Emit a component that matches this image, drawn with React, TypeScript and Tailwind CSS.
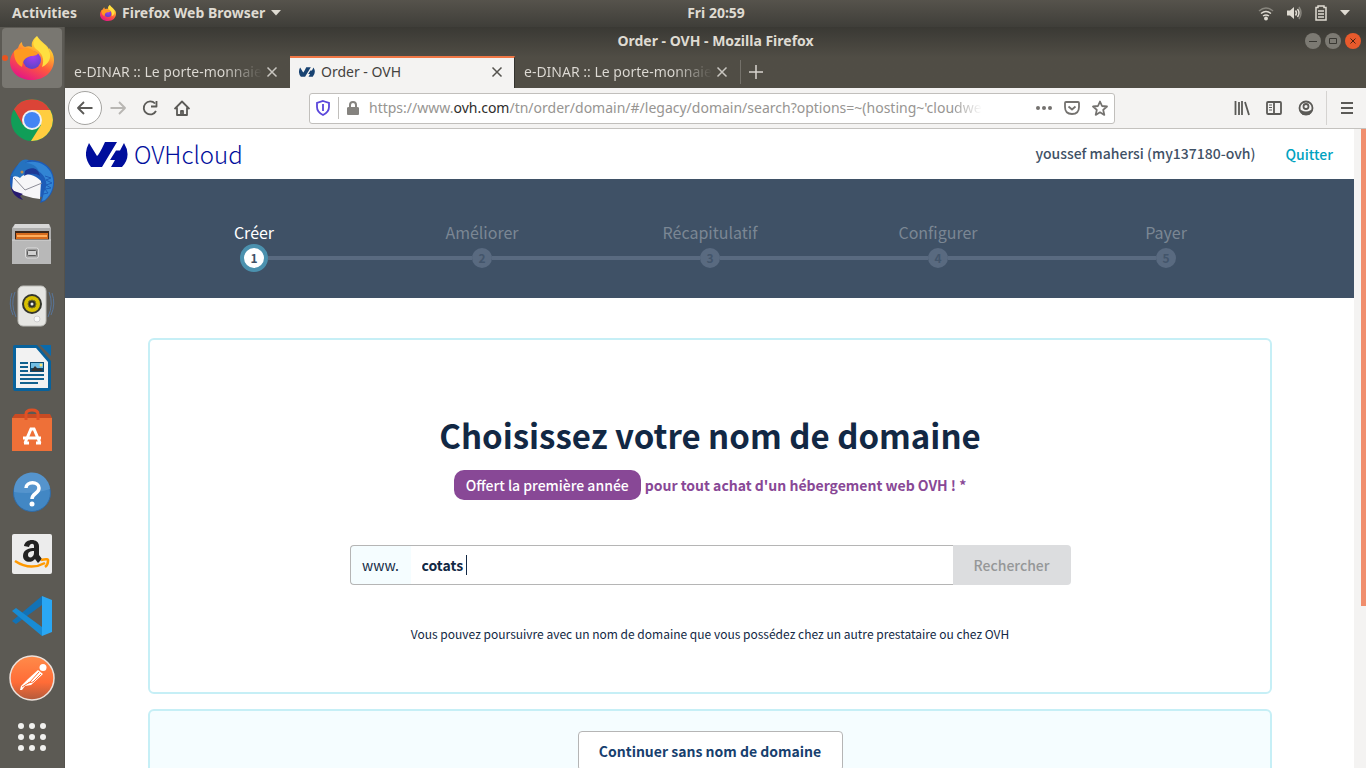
import type { ReactNode } from 'react';

const steps = ['Créer', 'Améliorer', 'Récapitulatif', 'Configurer', 'Payer'];

function FirefoxIcon({ className, id }: { className: string; id: string }) {
  return (
    <svg viewBox="0 0 44 44" className={className} aria-hidden="true">
      <defs>
        <linearGradient id={id + 'a'} x1="0.8" y1="0" x2="0.3" y2="1">
          <stop offset="0" stopColor="#fff44f" />
          <stop offset="0.3" stopColor="#ffb92e" />
          <stop offset="0.6" stopColor="#ff5a3c" />
          <stop offset="1" stopColor="#e31587" />
        </linearGradient>
        <radialGradient id={id + 'b'} cx="0.55" cy="0.3" r="0.7">
          <stop offset="0" stopColor="#a63df0" />
          <stop offset="1" stopColor="#5b45c9" />
        </radialGradient>
      </defs>
      <path
        d="M27 0c-4 3-6 7-5 11-2-1-5-1-7 0-3-1-3-4-3-5-2 1-3 3-4 6C4 14 0 20 0 26c0 10 9 18 22 18s22-9 22-20c0-5-2-9-5-12 0 2 1 3 1 4-2-8-9-9-13-16z"
        fill={'url(#' + id + 'a)'}
      />
      <circle cx="22" cy="24" r="9" fill={'url(#' + id + 'b)'} />
      <path d="M4 15c3-2 7-2 10-2 2-2 5-1 8 1l6 3c0 2-3 3-7 3-4 1-7 3-8 6l-1 5C5 27 4 21 4 15z" fill="#ff9a20" />
      <path d="M27 1c-4 4-5 8-1 12 6 4 9 10 6 18 7-3 10-10 7-16-2-6-9-8-12-14z" fill="#ffdf40" />
    </svg>
  );
}

function Launcher() {
  return (
    <nav
      aria-label="Dock"
      className="flex w-[65px] shrink-0 flex-col items-center border-r border-[#54524c] bg-[#5c5a54]"
    >
      <DockItem label="Firefox" active>
        <FirefoxIcon id="dock" className="size-11" />
      </DockItem>
      <DockItem label="Chrome">
        <svg viewBox="0 0 44 44" className="size-11">
          <circle cx="22" cy="22" r="21" fill="#109e58" />
          <path d="M22 22 3.800 11.500A21 21 0 0 1 40.200 12H22z" fill="#db4437" />
          <path d="M22 12h18.200A21 21 0 0 1 21 43l10-16z" fill="#ffcd40" />
          <path d="M4 11 13 27l9-15z" fill="#db4437" />
          <circle cx="22" cy="22" r="10" fill="#f1f1f1" />
          <circle cx="22" cy="22" r="8" fill="#4285f4" />
        </svg>
      </DockItem>
      <DockItem label="Thunderbird">
        <svg viewBox="0 0 46 46" className="size-[46px]">
          <path d="M11 4C20-2 36 1 42 11c6 11 3 24-6 31l-5 2 2-6L4 33C-2 22 1 12 11 4z" fill="#1d5cb8" />
          <path d="M14 5c9-5 24-2 29 11 3 9 0 19-7 25l-3 1 2-9C44 18 26 8 14 5z" fill="#3285d4" />
          <path d="m36 17 6 2-5 2 6 3-6 2 5 3-6 1 3 4-5 1" stroke="#1d5cb8" fill="none" />
          <path d="M4 18c8-5 21-4 28 4l-1 18C22 39 11 36 3 31z" fill="#f6f6f8" />
          <path d="m5 19 11 12 17-7" fill="none" stroke="#8d8d98" strokeWidth="1" />
          <path d="M2 17 10 4c3-4 7-4 10-3l-4 3c9 0 14 5 15 13-8-4-16-3-20 2-3-2-6-2-9-2z" fill="#2572bf" />
          <path d="M16 12c6-5 14-3 15 5-5-3-11-3-16 0z" fill="#1c3896" />
          <circle cx="13" cy="13" r="1.500" fill="#bf8c4e" />
          <path d="m2 28 3 4 9 3-3 2 3 4C7 39 3 34 2 28z" fill="#27196e" />
        </svg>
      </DockItem>
      <DockItem label="Files">
        <svg viewBox="0 0 44 44" className="size-11">
          <path d="M5 2h34l2 4v36H2V6z" fill="#aeaeae" />
          <path d="M5 2h34l1 4H3z" fill="#d7d7d7" />
          <path d="M5 9h34v9H5z" fill="#3c2619" />
          <path d="M6 11h32v6H6z" fill="#d66a1c" />
          <path d="M7 13h30v2H7z" fill="#ffad5b" />
          <path d="M2 18h39v24H2z" fill="#b8b8b8" />
          <path d="M2 18h39" stroke="#d4d4d4" />
          <rect x="15.500" y="26" width="13" height="10" rx="2" fill="#9c9c9c" stroke="#dedede" />
          <rect x="17.500" y="28.500" width="9" height="5" rx="1" fill="#d1d1d1" stroke="#595959" />
        </svg>
      </DockItem>
      <DockItem label="Rhythmbox">
        <svg viewBox="0 0 46 46" className="size-[46px]">
          <path d="M6 9Q1 21 7 34M3 10q-4 11 1 22M40 9q5 12-1 25M43 10q4 11-1 22" stroke="#58759a" fill="none" />
          <rect x="9" y="3" width="28" height="40" rx="5" fill="#e6e6e3" stroke="#bcbcb8" />
          <circle cx="23" cy="21" r="10" fill="#34362d" />
          <circle cx="23" cy="21" r="8" fill="#d8c000" />
          <circle cx="23" cy="21" r="4" fill="#303029" stroke="#7b711b" />
          <circle cx="23" cy="21" r="1.500" fill="#eee" />
          <circle cx="28" cy="36" r="3" fill="#f8f8f8" stroke="#cfcfcf" />
        </svg>
      </DockItem>
      <DockItem label="Writer">
        <svg viewBox="0 0 42 46" className="h-[46px] w-[42px]">
          <path d="M4 0h22l14 16v27q0 3-3 3H4q-2 0-2-3V2q0-2 2-2z" fill="#08629c" />
          <path d="M29 0h11v11z" fill="#0b6aab" />
          <path d="M5 3h20l12 14v26H5z" fill="#f2f2f2" />
          <path d="M9 18h8M9 22h8M9 26h8M9 30h24M9 34h24M9 38h18" stroke="#11618e" strokeWidth="2" />
          <path d="M19 17h14v10H19z" fill="#0c4c72" />
          <path d="M20 18h12v5H20z" fill="#71bee4" />
          <path d="m20 26 4-5 3 3 2-1 3 3z" fill="#333" />
          <circle cx="30" cy="20" r="1.500" fill="#ffe16b" />
        </svg>
      </DockItem>
      <DockItem label="Software">
        <svg viewBox="0 0 44 46" className="h-[46px] w-11">
          <path d="M2 11 5 7h35l2 4z" fill="#c94b23" />
          <path d="M2 11h40v33H2z" fill="#ee7038" />
          <path d="M16 13V7q0-4 6-4t6 4v6" stroke="#df5125" strokeWidth="3" fill="none" />
          <path d="m15 36 6-14h3l6 14M13 31h18M14 36h5M26 36h5" stroke="#fff" strokeWidth="3" fill="none" />
        </svg>
      </DockItem>
      <DockItem label="Help">
        <svg viewBox="0 0 44 44" className="size-11">
          <circle cx="22" cy="23" r="18.500" fill="#4287c4" stroke="#316ba5" />
          <path d="M4 22a18 18 0 0 1 36-3q-18 6-36 3z" fill="#5594cd" />
          <path d="M16 18c0-7 13-7 13 0 0 6-7 5-7 11" stroke="#fff" strokeWidth="3.500" fill="none" />
          <circle cx="22" cy="34" r="2.500" fill="#fff" />
        </svg>
      </DockItem>
      <DockItem label="Amazon">
        <svg viewBox="0 0 44 44" className="size-11">
          <rect x="2" y="2" width="40" height="40" rx="2" fill="#ececec" />
          <path d="M14 14c1-8 15-8 15 0v9l3 4-4 4-3-4c-4 5-12 3-12-3 0-7 7-8 11-8v-2c0-3-4-3-5 1zm10 5c-4 0-6 1-6 4 0 4 6 3 6-2z" fill="#222" fillRule="evenodd" />
          <path d="M5 29q15 10 30 2M31 28q8-2 7 1 0 4-3 6" stroke="#ff9900" strokeWidth="2.500" fill="none" />
        </svg>
      </DockItem>
      <DockItem label="Code">
        <svg viewBox="0 0 44 44" className="size-11">
          <path d="M2 27 32 2v9L6 30z" fill="#1272b6" />
          <path d="m2 17 4-3 26 19v9z" fill="#188bd4" />
          <path d="m32 2 10 4v32l-10 4z" fill="#2aa7f4" />
        </svg>
      </DockItem>
      <DockItem label="Postman">
        <svg viewBox="0 0 46 46" className="size-[46px]">
          <defs>
            <linearGradient id="postman" x1="0" y1="0" x2="0" y2="1">
              <stop offset="0" stopColor="#ff8b4a" />
              <stop offset="0.600" stopColor="#ff6c37" />
              <stop offset="1" stopColor="#b25a3c" />
            </linearGradient>
          </defs>
          <circle cx="23" cy="23" r="22" fill="url(#postman)" stroke="#ece1db" strokeWidth="1.500" />
          <path d="m11 35 1-4 7-7 10-9 5 4-12 11-6 1-3 4z" fill="#fff" />
          <circle cx="34" cy="12.500" r="3.500" fill="#fff" />
          <path d="m13 32 8-5 9-10M19 28l5-1 8-8" stroke="#ff7137" fill="none" />
        </svg>
      </DockItem>
      <button aria-label="Show applications" className="mt-3 grid size-8 grid-cols-3 place-items-center">
        {Array.from({ length: 9 }, (_, i) => (
          <span key={i} className="size-1.5 rounded-full bg-[#f1f1ef]" />
        ))}
      </button>
    </nav>
  );
}

function DockItem({ label, active, children }: { label: string; active?: boolean; children: ReactNode }) {
  return (
    <button aria-label={label} className="relative flex h-[62px] w-full shrink-0 items-center justify-center">
      {active && <span className="absolute inset-x-0.5 inset-y-px rounded bg-[#797771]" />}
      {active && <span className="absolute left-0.5 size-1.5 rounded-full bg-[#e95420]" />}
      <span className="relative">{children}</span>
    </button>
  );
}

function CloseIcon() {
  return (
    <svg viewBox="0 0 12 12" className="size-3" fill="none" stroke="currentColor" strokeWidth="1.500">
      <path d="m1.500 1.500 9 9m0-9-9 9" />
    </svg>
  );
}

function BackgroundTab() {
  return (
    <div className="flex w-[225px] items-center px-[9px]">
      <span className="w-[188px] overflow-hidden whitespace-nowrap bg-gradient-to-r from-[#dedbd5] from-80% to-transparent bg-clip-text text-transparent">
        e-DINAR :: Le porte-monnaie
      </span>
      <button aria-label="Close tab" className="ml-1 text-[#c9c6c0]">
        <CloseIcon />
      </button>
    </div>
  );
}

function OvhMark({ className }: { className: string }) {
  return (
    <svg viewBox="0 0 42 25" className={className} fill="currentColor" aria-hidden="true">
      <path d="M3 1 11 14Q13 13 19 0H31L16 25H5Q-4 14 3 1z" />
      <path d="M38 1Q46 14 36 25H25L29 18H24L30 8.500H34z" />
    </svg>
  );
}

function SystemBar() {
  return (
    <header className="grid h-[27px] shrink-0 grid-cols-[1fr_auto_1fr] items-center bg-gradient-to-b from-[#56534c] to-[#3f3e39] pb-0.5 text-sm font-bold text-[#dfdbd2]">
      <div className="flex items-center">
        <button className="ml-3">Activities</button>
        <button className="ml-[23px] flex items-center gap-1.5">
          <FirefoxIcon id="menu" className="size-4" />
          Firefox Web Browser
          <Caret />
        </button>
      </div>
      <button className="pl-[66px]">Fri 20:59</button>
      <div className="flex items-center justify-end gap-3 pr-4">
        <svg viewBox="0 0 16 16" className="size-4" fill="none" stroke="currentColor" strokeWidth="1.500">
          <path d="M1 6q7-6 14 0" opacity="0.400" />
          <path d="M3 8.500q5-4 10 0M5 11q3-2 6 0" />
          <circle cx="8" cy="13.500" r="1.200" fill="currentColor" />
        </svg>
        <svg viewBox="0 0 16 16" className="size-4" fill="none" stroke="currentColor" strokeWidth="1.500">
          <path d="M1 5.500h3L8 2v12l-4-3.500H1z" fill="currentColor" stroke="none" />
          <path d="M9.500 5.500q2 2.500 0 5M11.500 4q3 4 0 8" />
          <path d="M13 2q4 6 0 12" opacity="0.400" />
        </svg>
        <svg viewBox="0 0 14 16" className="h-4 w-3.5" fill="none" stroke="currentColor" strokeWidth="1.500">
          <path d="M2 2.500h2V1h6v1.500h2V15H2zM4 6h6M4 9h6M4 12h6" />
        </svg>
        <Caret />
      </div>
    </header>
  );
}

function Caret() {
  return (
    <svg viewBox="0 0 10 6" className="h-1.5 w-2.5" fill="currentColor">
      <path d="M0 0h10L5 5.500z" />
    </svg>
  );
}

function BrowserChrome() {
  return (
    <div className="shrink-0">
      <div className="bg-gradient-to-b from-[#3a3934] to-[#504d45] to-50%">
        <div className="grid h-[29px] grid-cols-[1fr_auto_1fr] items-center pb-0.5 text-sm font-bold text-[#dfdbd2]">
          <span />
          <span>Order - OVH - Mozilla Firefox</span>
          <div className="flex justify-end gap-1 pr-[5px]">
            <WindowButton label="Minimize">
              <path d="M4 8.500h8" />
            </WindowButton>
            <WindowButton label="Maximize">
              <path d="M4.500 5.500h7v5h-7z" />
            </WindowButton>
            <WindowButton label="Close" close>
              <path d="m5.500 5.500 5 5m0-5-5 5" />
            </WindowButton>
          </div>
        </div>
        <div className="flex h-8 text-sm">
          <BackgroundTab />
          <div className="flex w-[225px] items-center border-r border-t-2 border-r-[#33322e] border-t-[#f07746] bg-[#f4f3f2] px-[9px] pb-0.5 text-[#44423e]">
            <OvhMark className="mr-1.5 h-2.5 w-4 text-[#184271]" />
            <span>Order - OVH</span>
            <button aria-label="Close tab" className="ml-auto mr-0.5 text-[#55534f]">
              <CloseIcon />
            </button>
          </div>
          <BackgroundTab />
          <div className="flex items-center gap-2 text-[#d7d4ce]">
            <span className="h-6 w-px bg-[#74716a]" />
            <button aria-label="New tab">
              <svg viewBox="0 0 14 14" className="size-3.5" stroke="currentColor" strokeWidth="1.500">
                <path d="M7 0v14M0 7h14" />
              </svg>
            </button>
          </div>
        </div>
      </div>
      <div className="flex h-[41px] items-center border-b border-[#c4c2bf] bg-[#f4f3f2] text-[#5b5a57]">
        <div className="flex w-[244px] items-center gap-4 pl-[3px]">
          <button aria-label="Back" className="flex size-[34px] items-center justify-center rounded-full border border-[#a5a4a1] bg-white">
            <ToolIcon>
              <path d="M15.500 8H1M7 2 1 8l6 6" />
            </ToolIcon>
          </button>
          <button aria-label="Forward" className="-ml-2 text-[#b8b6b3]">
            <ToolIcon>
              <path d="M.5 8H15M9 2l6 6-6 6" />
            </ToolIcon>
          </button>
          <button aria-label="Reload">
            <ToolIcon>
              <path d="M13 3.500A6.500 6.500 0 1 0 14 11M14.500 1v5.500H9" />
            </ToolIcon>
          </button>
          <button aria-label="Home">
            <ToolIcon>
              <path d="m.5 9 7.500-7.500L15.500 9M3 7.500V15h10V7.500M7 15v-4h2v4" />
            </ToolIcon>
          </button>
        </div>
        <div className="flex h-[31px] w-[806px] min-w-0 shrink items-center rounded-[3px] border border-[#c1bfbc] bg-white px-1.5 text-sm">
          <svg viewBox="0 0 14 16" className="h-4 w-3.5" fill="none" stroke="#5a46db" strokeWidth="1.800">
            <path d="M7 1 13 3v4c0 4-2 6-6 8-4-2-6-4-6-8V3z" />
            <path d="M7 4v7" />
          </svg>
          <span className="mx-2 h-[22px] w-px bg-[#c1bfbc]" />
          <svg viewBox="0 0 12 14" className="h-3.5 w-3 text-[#85837f]" fill="currentColor">
            <path d="M2 6V4q0-4 4-4t4 4v2q2 0 2 1v6q0 1-1 1H1q-1 0-1-1V7q0-1 2-1zm2 0h4V4q0-2-2-2T4 4z" />
          </svg>
          <span className="ml-2.5 min-w-0 flex-1 overflow-hidden whitespace-nowrap text-[#979592]">
            https://www.<span className="text-[#2e2d2b]">ovh.com</span>/tn/order/domain/#/legacy/domain/search?options=~(hosting~'clou
            <span className="bg-gradient-to-r from-[#979592] to-transparent bg-clip-text text-transparent">dwe</span>
          </span>
          <div className="ml-9 flex items-center gap-3 text-[#74726f]">
            <button aria-label="Page actions">
              <svg viewBox="0 0 16 16" className="size-4" fill="currentColor">
                <circle cx="2" cy="8" r="2" />
                <circle cx="8" cy="8" r="2" />
                <circle cx="14" cy="8" r="2" />
              </svg>
            </button>
            <button aria-label="Pocket">
              <ToolIcon>
                <path d="M2 2h12q1 0 1 1v4q0 7-7 7T1 7V3q0-1 1-1zM4.500 6.500 8 9.500l3.500-3" />
              </ToolIcon>
            </button>
            <button aria-label="Bookmark">
              <ToolIcon>
                <path d="m8 1.500 2 4.500 5 .5-3.800 3.400 1.100 5L8 12.300l-4.300 2.600 1.100-5L1 6.500 6 6z" />
              </ToolIcon>
            </button>
          </div>
        </div>
        <div className="ml-auto flex items-center gap-4 pr-[11px]">
          <button aria-label="Library">
            <ToolIcon>
              <path d="M1.500 1v14M5 2v13M8 1v14M11 2l4 13" />
            </ToolIcon>
          </button>
          <button aria-label="Sidebar">
            <ToolIcon>
              <path d="M2 2h12q1 0 1 1v10q0 1-1 1H2q-1 0-1-1V3q0-1 1-1zM8 2v12" />
              <path d="M3 5h3M3 7.500h3M3 10h3" strokeWidth="1" />
            </ToolIcon>
          </button>
          <button aria-label="Account">
            <ToolIcon>
              <circle cx="8" cy="8" r="6.500" />
              <circle cx="8" cy="6.500" r="2.500" />
              <path d="M3 11q5 3 10 0l-2 3H5z" fill="currentColor" />
            </ToolIcon>
          </button>
          <span className="-mx-1 h-[34px] w-px bg-[#d5d3d1]" />
          <button aria-label="Menu">
            <ToolIcon>
              <path d="M2 3h12M2 8h12M2 13h12" />
            </ToolIcon>
          </button>
        </div>
      </div>
    </div>
  );
}

function ToolIcon({ children }: { children: ReactNode }) {
  return (
    <svg viewBox="0 0 16 16" className="size-4" fill="none" stroke="currentColor" strokeWidth="1.800" strokeLinejoin="round">
      {children}
    </svg>
  );
}

function WindowButton({ label, close, children }: { label: string; close?: boolean; children: ReactNode }) {
  return (
    <button
      aria-label={label}
      className={close ? 'size-4 rounded-full bg-[#e85a2c] text-[#4b2211]' : 'size-4 rounded-full bg-[#7c7a73] text-[#393833]'}
    >
      <svg viewBox="0 0 16 16" className="size-4" fill="none" stroke="currentColor">
        {children}
      </svg>
    </button>
  );
}

function Stepper() {
  return (
    <ol className="grid h-[119px] shrink-0 grid-cols-5 bg-[#3f5166] pt-[41px] pr-[74px] pl-[75px]">
      {steps.map((step, i) => (
        <li key={step} className={i === 0 ? 'flex flex-col items-center text-white' : 'flex flex-col items-center text-[#7b8794]'}>
          <span className="h-6 text-base leading-6">{step}</span>
          <div className="grid w-full grid-cols-[1fr_auto_1fr] items-center">
            <span className={i === 0 ? 'h-1' : 'h-1 bg-[#596a80]'} />
            {i === 0 ? (
              <span className="flex size-7 items-center justify-center rounded-full border-4 border-[#4b91ae] bg-white text-xs font-bold text-[#3f5166]">
                1
              </span>
            ) : (
              <span className="my-1 flex size-5 items-center justify-center rounded-full bg-[#596a80] text-xs font-bold text-[#43556b]">
                {i + 1}
              </span>
            )}
            <span className={i === 4 ? 'h-1' : 'h-1 bg-[#596a80]'} />
          </div>
        </li>
      ))}
    </ol>
  );
}

function OrderPage() {
  return (
    <div className="flex min-h-0 flex-1 bg-white font-['Noto_Sans_CJK_JP',sans-serif]">
      <div className="flex min-w-0 flex-1 flex-col overflow-hidden">
        <header className="flex h-[50px] shrink-0 items-center pr-[21px] pl-[21px] text-[#3f5166]">
          <a href="#ovh" aria-label="OVHcloud" className="flex items-center gap-1.5 text-[#000e9c]">
            <OvhMark className="h-[25px] w-[42px]" />
            <span className="text-2xl font-light">OVHcloud</span>
          </a>
          <span className="ml-auto pb-0.5 text-sm font-medium">youssef mahersi (my137180-ovh)</span>
          <a href="#quit" className="ml-[30px] text-sm font-medium text-[#00a2bf]">
            Quitter
          </a>
        </header>
        <Stepper />
        <main className="flex flex-col gap-[15px] pt-10 pr-[82px] pl-[83px] text-[#122844]">
          <section className="flex h-[356px] shrink-0 flex-col items-center rounded-md border-2 border-[#c6eff6] pt-[73px]">
            <h1 className="text-[33px] leading-[44px] font-bold">Choisissez votre nom de domaine</h1>
            <p className="mt-[13px] flex items-center gap-1 text-sm font-bold text-[#884896]">
              <span className="flex h-[30px] items-center rounded-[10px] bg-[#884896] px-3 font-medium text-white">
                Offert la première année
              </span>
              pour tout achat d'un hébergement web OVH ! *
            </p>
            <form className="mt-[45px] flex h-10 w-full max-w-[721px] text-sm" onSubmit={(e) => e.preventDefault()}>
              <label htmlFor="domain" className="flex w-[61px] items-center justify-center rounded-l border border-r-0 border-[#b5b5b5] bg-[#f5fdff]">
                www.
              </label>
              <div className="relative flex min-w-0 flex-1">
                <input
                  id="domain"
                  defaultValue="cotats"
                  className="min-w-0 flex-1 border-y border-[#b5b5b5] px-[11px] font-bold outline-none"
                />
                <span className="absolute top-2.5 left-[55px] h-5 w-px bg-[#122844]" />
              </div>
              <button disabled className="w-[118px] rounded-r bg-[#dcdddf] font-medium text-[#959798]">
                Rechercher
              </button>
            </form>
            <p className="mt-[39px] text-xs leading-5">
              Vous pouvez poursuivre avec un nom de domaine que vous possédez chez un autre prestataire ou chez OVH
            </p>
          </section>
          <section className="flex h-[356px] shrink-0 justify-center rounded-md border-2 border-[#c6eff6] bg-[#f5fdff] pt-5">
            <button className="h-10 w-[265px] rounded-sm border border-[#b5b5b5] bg-white text-sm font-bold text-[#17406e]">
              Continuer sans nom de domaine
            </button>
          </section>
        </main>
      </div>
      <div className="flex w-3 shrink-0 justify-end bg-[#f4f3f2]">
        <span className="h-[477px] w-[5px] bg-[#f08e6d]" />
      </div>
    </div>
  );
}

export default function App() {
  return (
    <div className="flex h-screen flex-col overflow-hidden font-['Noto_Sans',sans-serif]">
      <SystemBar />
      <div className="flex min-h-0 flex-1">
        <Launcher />
        <div className="flex min-w-0 flex-1 flex-col">
          <BrowserChrome />
          <OrderPage />
        </div>
      </div>
    </div>
  );
}
